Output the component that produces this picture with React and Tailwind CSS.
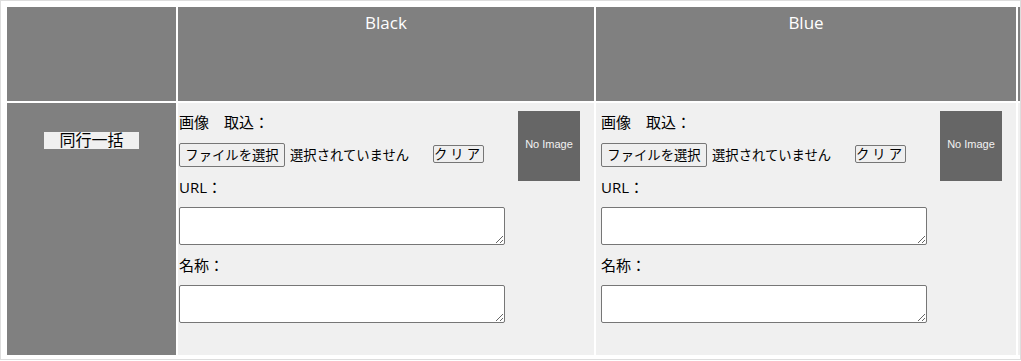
import React from "react";

const font = { fontFamily: '"Open Sans", "Noto Sans CJK JP", sans-serif' };

const ColorCell = ({ pad }) => {
  return (
    <div className={`bg-[#f0f0f0] h-[252px] pt-[8px] ${pad}`}>
      <div className="flex items-start gap-[13px]">
        <div className="w-[326px] text-[15px] text-black">
          <div className="leading-[22px]">画像　取込：</div>
          <div className="flex items-center mt-[10px]">
            <div className="flex items-center w-[254px]">
              <button className="h-[24px] w-[106px] border border-[#767676] rounded-[2px] bg-[#efefef] text-[13.33px] leading-[20px]">
                ファイルを選択
              </button>
              <span className="ml-[5px] text-[13.33px] leading-[20px]">選択されていません</span>
            </div>
            <button className="h-[18px] w-[51px] border border-[#767676] rounded-[2px] bg-[#efefef] text-[13.33px] leading-[16px] tracking-[3px] -mt-[2px]">
              クリア
            </button>
          </div>
          <div className="leading-[22px] mt-[9px]">URL：</div>
          <textarea className="block mt-[9px] w-[326px] h-[38px] bg-white border border-[#767676] rounded-[2px]" />
          <div className="leading-[22px] mt-[9px]">名称：</div>
          <textarea className="block mt-[9px] w-[326px] h-[38px] bg-white border border-[#767676] rounded-[2px]" />
        </div>
        <div className="w-[62px] h-[70px] bg-[#666666] flex items-center justify-center">
          <span
            className="text-[11px] text-[#f2f2f2] -mt-[4px]"
            style={{ fontFamily: '"Liberation Sans", Arial, sans-serif' }}
          >
            No Image
          </span>
        </div>
      </div>
    </div>
  );
};

export default function App() {
  return (
    <div
      className="w-[1021px] h-[360px] border border-[#dddddd] bg-white pl-[6px] pt-[6px] overflow-hidden"
      style={font}
    >
      <div className="grid grid-cols-[169px_416px_420px_120px] grid-rows-[94px_252px] gap-[2px] w-[1131px]">
        <div className="bg-[#808080]" />
        <div className="bg-[#808080] text-white text-[17px] text-center pt-[4px] leading-[24px]">Black</div>
        <div className="bg-[#808080] text-white text-[17px] text-center pt-[4px] leading-[24px]">Blue</div>
        <div className="bg-[#808080]" />

        <div className="bg-[#808080] flex justify-center pt-[29px]">
          <button className="w-[95px] h-[17px] bg-[#f0f0f0] text-[16px] leading-[17px] text-black">
            同行一括
          </button>
        </div>
        <ColorCell pad="pl-[1px]" />
        <ColorCell pad="pl-[5px]" />
        <div className="bg-[#f0f0f0]" />
      </div>
    </div>
  );
}
